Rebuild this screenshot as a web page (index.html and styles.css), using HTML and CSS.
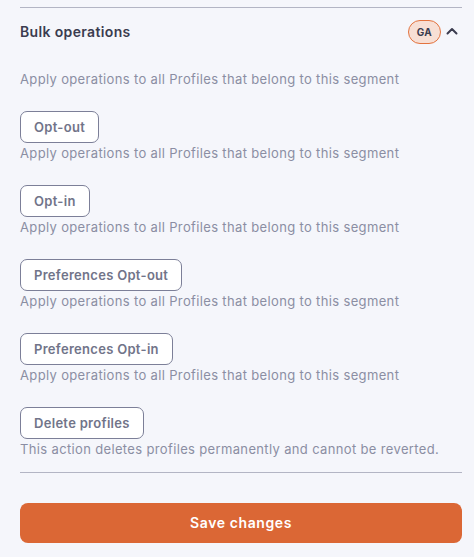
FILE: index.html
```html
<!DOCTYPE html>
<html>
<head>
<meta charset="utf-8">
<link rel="stylesheet" href="styles.css">
</head>
<body>
<div class="panel">
  <hr class="rule">
  <div class="header">
    <span class="title">Bulk operations</span>
    <div class="header-right">
      <span class="badge">GA</span>
      <svg class="chev" width="12" height="8" viewBox="0 0 12 8"><path d="M1.5 6.5 L6 2 L10.5 6.5" fill="none" stroke="#3b3c4f" stroke-width="2" stroke-linecap="round" stroke-linejoin="round"/></svg>
    </div>
  </div>
  <p class="desc intro">Apply operations to all Profiles that belong to this segment</p>
  <div class="ops">
    <div class="op"><button class="op-btn">Opt-out</button><p class="desc">Apply operations to all Profiles that belong to this segment</p></div>
    <div class="op"><button class="op-btn">Opt-in</button><p class="desc">Apply operations to all Profiles that belong to this segment</p></div>
    <div class="op"><button class="op-btn">Preferences Opt-out</button><p class="desc">Apply operations to all Profiles that belong to this segment</p></div>
    <div class="op"><button class="op-btn">Preferences Opt-in</button><p class="desc">Apply operations to all Profiles that belong to this segment</p></div>
    <div class="op"><button class="op-btn">Delete profiles</button><p class="desc">This action deletes profiles permanently and cannot be reverted.</p></div>
  </div>
  <hr class="rule bottom">
  <button class="save">Save changes</button>
</div>
</body>
</html>
```
FILE: styles.css
```css
html, body {
  margin: 0;
  padding: 0;
  background: #f5f6fb;
}
body {
  font-family: Inter, "Open Sans", "Liberation Sans", sans-serif;
}
.panel {
  display: flex;
  flex-direction: column;
  padding: 7px 12px 0 20px;
}
.rule {
  margin: 0;
  border: 0;
  height: 1px;
  background: #b3b5c4;
}
.header {
  height: 46px;
  display: flex;
  align-items: center;
  justify-content: space-between;
}
.title {
  font-size: 14px;
  font-weight: 600;
  letter-spacing: 0.35px;
  color: #3b3c4f;
}
.header-right {
  display: flex;
  align-items: center;
  gap: 5px;
}
.badge {
  width: 31px;
  height: 22px;
  border: 1px solid #e3733f;
  border-radius: 12px;
  background: #f7dfd5;
  color: #3b3c4f;
  font-size: 10px;
  font-weight: 700;
  letter-spacing: 0.3px;
  display: flex;
  align-items: center;
  justify-content: center;
  margin-top: 1px;
}
.chev {
  display: block;
  margin-right: 4px;
}
.desc {
  margin: 0;
  font-size: 13px;
  line-height: 20px;
  letter-spacing: 0.35px;
  color: #8b8ea3;
}
.intro {
  margin-top: 15px;
}
.ops {
  display: flex;
  flex-direction: column;
  gap: 22px;
  margin-top: 22px;
}
.op {
  display: flex;
  flex-direction: column;
  align-items: flex-start;
}
.op-btn {
  height: 32px;
  padding: 0 13px;
  border: 1px solid #7c7f98;
  border-radius: 7px;
  background: #ffffff;
  color: #717489;
  font-family: inherit;
  font-size: 13px;
  font-weight: 600;
  letter-spacing: 0.3px;
}
.bottom {
  margin-top: 13px;
}
.save {
  margin-top: 30px;
  height: 40px;
  padding-bottom: 2px;
  border: 0;
  border-radius: 8px;
  background: #db6735;
  color: #ffffff;
  font-family: inherit;
  font-size: 14px;
  font-weight: 600;
  letter-spacing: 0.6px;
}
```
